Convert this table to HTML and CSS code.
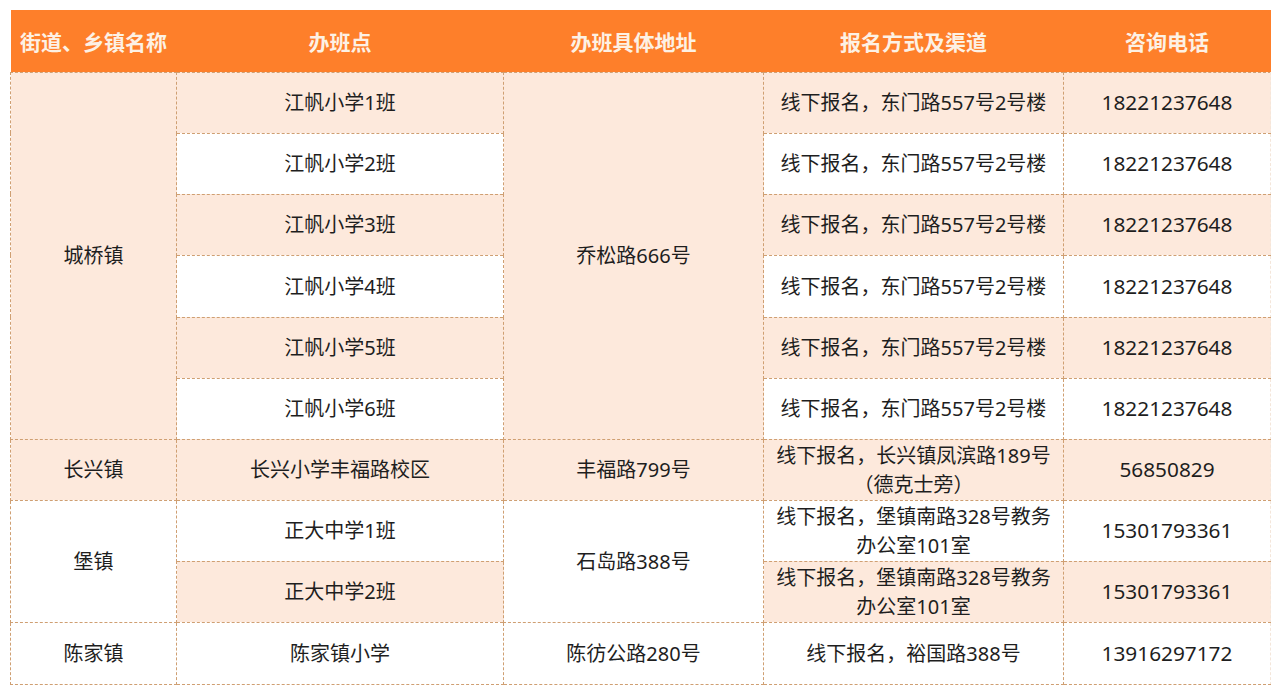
FILE: index.html
```html
<!DOCTYPE html>
<html lang="zh-CN">
<head>
<meta charset="utf-8">
<title>办班点一览</title>
<link rel="stylesheet" href="styles.css">
</head>
<body>
<table class="tbl">
  <colgroup>
    <col class="c1"><col class="c2"><col class="c3"><col class="c4"><col class="c5">
  </colgroup>
  <thead>
    <tr class="head">
      <th>街道、乡镇名称</th>
      <th>办班点</th>
      <th>办班具体地址</th>
      <th>报名方式及渠道</th>
      <th>咨询电话</th>
    </tr>
  </thead>
  <tbody>
    <tr class="r61">
      <td rowspan="6" class="pk">城桥镇</td>
      <td class="pk">江帆小学1班</td>
      <td rowspan="6" class="pk">乔松路666号</td>
      <td class="pk">线下报名，东门路557号2号楼</td>
      <td class="pk tel">18221237648</td>
    </tr>
    <tr class="r61">
      <td>江帆小学2班</td>
      <td>线下报名，东门路557号2号楼</td>
      <td class="tel">18221237648</td>
    </tr>
    <tr class="r61">
      <td class="pk">江帆小学3班</td>
      <td class="pk">线下报名，东门路557号2号楼</td>
      <td class="pk tel">18221237648</td>
    </tr>
    <tr class="r62">
      <td>江帆小学4班</td>
      <td>线下报名，东门路557号2号楼</td>
      <td class="tel">18221237648</td>
    </tr>
    <tr class="r61">
      <td class="pk">江帆小学5班</td>
      <td class="pk">线下报名，东门路557号2号楼</td>
      <td class="pk tel">18221237648</td>
    </tr>
    <tr class="r61">
      <td>江帆小学6班</td>
      <td>线下报名，东门路557号2号楼</td>
      <td class="tel">18221237648</td>
    </tr>
    <tr class="r61">
      <td class="pk">长兴镇</td>
      <td class="pk">长兴小学丰福路校区</td>
      <td class="pk">丰福路799号</td>
      <td class="pk">线下报名，长兴镇凤滨路189号<br>（德克士旁）</td>
      <td class="pk tel">56850829</td>
    </tr>
    <tr class="r61">
      <td rowspan="2">堡镇</td>
      <td>正大中学1班</td>
      <td rowspan="2">石岛路388号</td>
      <td>线下报名，堡镇南路328号教务<br>办公室101室</td>
      <td class="tel">15301793361</td>
    </tr>
    <tr class="r61">
      <td class="pk">正大中学2班</td>
      <td class="pk">线下报名，堡镇南路328号教务<br>办公室101室</td>
      <td class="pk tel">15301793361</td>
    </tr>
    <tr class="r62">
      <td>陈家镇</td>
      <td>陈家镇小学</td>
      <td>陈彷公路280号</td>
      <td>线下报名，裕国路388号</td>
      <td class="tel">13916297172</td>
    </tr>
  </tbody>
</table>
</body>
</html>
```

FILE: styles.css
```css
html, body {
  margin: 0;
  padding: 0;
  background: #ffffff;
}
body {
  padding: 10px 10px 0 10px;
  font-family: "Noto Sans", "Noto Sans CJK SC", sans-serif;
  color: #1e1e1e;
}
.tbl {
  width: 1260px;
  border-collapse: collapse;
  table-layout: fixed;
}
.c1 { width: 166px; }
.c2 { width: 327px; }
.c3 { width: 260px; }
.c4 { width: 300px; }
.c5 { width: 207px; }

.head th {
  height: 62px;
  padding: 0;
  background: #fe7f2a;
  color: #fdf1e4;
  font-family: "Noto Sans CJK SC", sans-serif;
  font-weight: 700;
  font-size: 21px;
  text-align: center;
  vertical-align: middle;
  border: none;
  box-sizing: border-box;
}
.tbl td {
  padding: 0;
  text-align: center;
  vertical-align: middle;
  font-size: 20px;
  line-height: 29px;
  border: 1px dashed #cf9f72;
  background: #ffffff;
  box-sizing: border-box;
}
.tbl td.pk {
  background: #fde9dc;
}
.tbl td.tel {
  font-size: 20.8px;
}
.r61 td { height: 61px; }
.r62 td { height: 62px; }
.tbl td[rowspan] { height: auto; }
.tbl tr > td:last-child {
  border-right-color: #f4e6da;
}
```
